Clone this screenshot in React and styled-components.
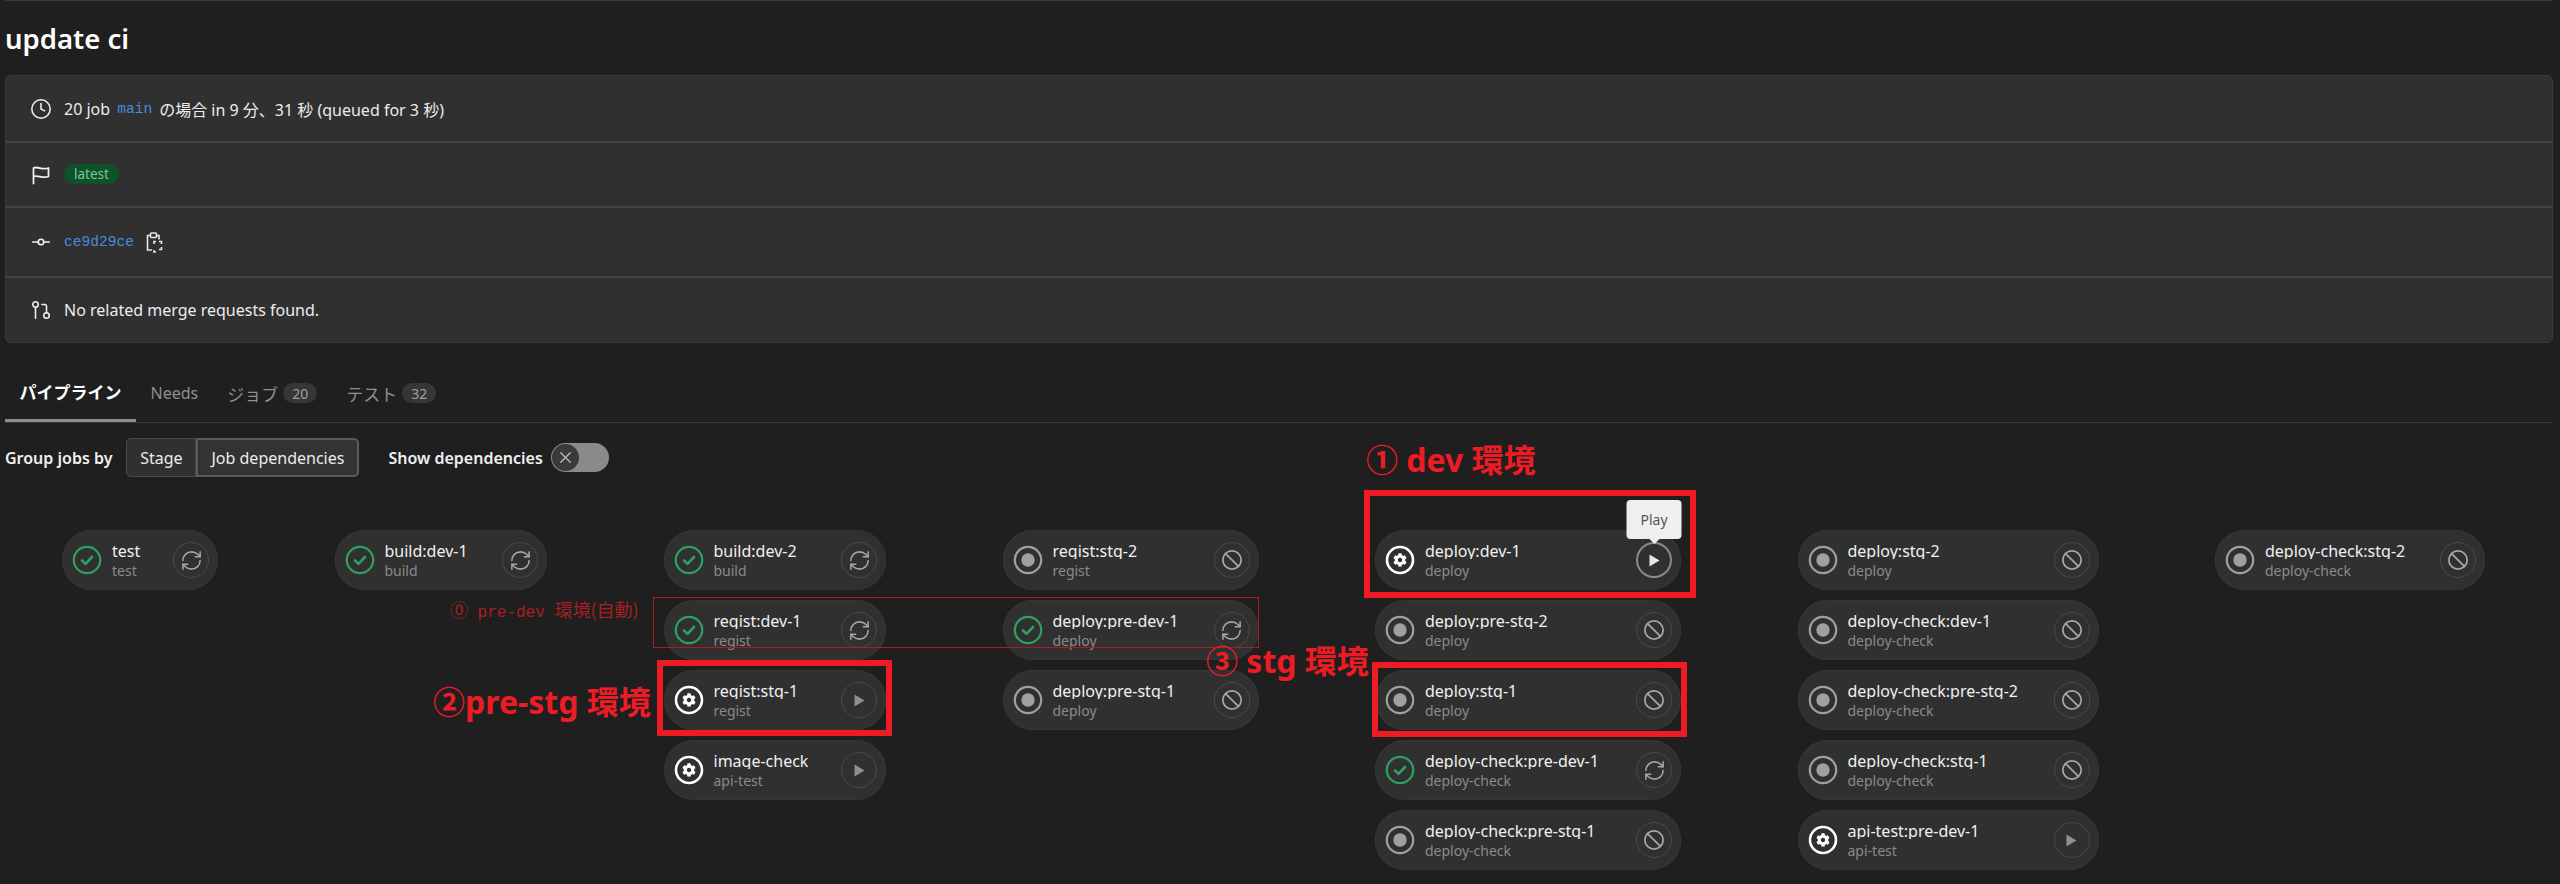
import React from 'react';
import styled, { createGlobalStyle } from 'styled-components';
import { Clock, GitCommitHorizontal, GitPullRequest, RefreshCw, Ban, X } from 'lucide-react';
import { FaCog } from 'react-icons/fa';

const SANS = `"Noto Sans", "Noto Sans CJK JP", sans-serif`;
const MONO = `"Liberation Mono", "Noto Sans CJK JP", monospace`;

const Global = createGlobalStyle`
  html, body { margin: 0; padding: 0; background: #1f1f1f; }
  body { font-family: ${SANS}; color: #ececec; }
`;

const Page = styled.div`
  position: relative;
  box-sizing: border-box;
  width: 2560px;
  height: 884px;
  padding: 0 7px 0 5px;
  overflow: hidden;
  background: #1f1f1f;
`;
const TopRule = styled.div`height: 1px; background: #3a3a3a;`;
const Title = styled.h1`
  margin: 0;
  height: 74px;
  display: flex;
  align-items: center;
  box-sizing: border-box;
  font-size: 27.5px;
  font-weight: 600;
  color: #fff;
`;
const InfoCard = styled.section`
  border: 1px solid #3c3c3c;
  border-radius: 6px;
  background: #303030;
  height: 268px;
  box-sizing: border-box;
  display: flex;
  flex-direction: column;
`;
const InfoRow = styled.div`
  height: ${p => p.$h}px;
  flex: none;
  box-sizing: border-box;
  display: flex;
  align-items: center;
  gap: 7px;
  padding-left: 24px;
  font-size: 16px;
  color: #ececec;
  border-bottom: ${p => (p.$last ? 'none' : '2px solid #444')};
`;
const RowIcon = styled.span`
  width: 22px;
  height: 22px;
  margin-right: 5px;
  display: flex;
  align-items: center;
  justify-content: center;
  color: #f0f0f0;
`;
const Code = styled.span`
  font-family: ${MONO};
  font-size: 14.6px;
  color: #428fdc;
`;
const Tag = styled.span`
  height: 20px;
  padding: 0 10px;
  border-radius: 10px;
  background: #0d532a;
  color: #7ec594;
  font-size: 13.5px;
  display: flex;
  align-items: center;
  margin-top: -2px;
`;
const TabBar = styled.nav`
  margin-top: 29px;
  height: 50px;
  display: flex;
  border-bottom: 1px solid #3a3a3a;
`;
const Tab = styled.div`
  display: flex;
  align-items: center;
  gap: 5px;
  padding: 0 ${p => p.$pad ?? 14.5}px 8px;
  height: 50px;
  box-sizing: border-box;
  font-size: ${p => p.$size ?? 16}px;
  font-weight: ${p => (p.$active ? 700 : 400)};
  color: ${p => (p.$active ? '#fff' : '#8f8f8f')};
  border-bottom: ${p => (p.$active ? '3px solid #8c8c8c' : 'none')};
`;
const Count = styled.span`
  height: 20px;
  min-width: 34px;
  border-radius: 10px;
  background: #363636;
  color: #a0a0a0;
  font-size: 14px;
  display: flex;
  align-items: center;
  justify-content: center;
`;
const Controls = styled.div`
  margin-top: 15px;
  height: 39px;
  display: flex;
  align-items: center;
  font-size: 16px;
`;
const ControlLabel = styled.span`
  font-weight: 600;
  color: #f0f0f0;
  margin-right: ${p => p.$mr}px;
`;
const ButtonGroup = styled.div`
  display: flex;
  height: 39px;
  margin-right: 29px;
`;
const Segment = styled.div`
  box-sizing: border-box;
  height: 39px;
  width: ${p => p.$w}px;
  display: flex;
  align-items: center;
  justify-content: center;
  background: ${p => (p.$selected ? '#333' : '#303030')};
  color: #ececec;
  border: ${p => (p.$selected ? '2px solid #5a5a5a' : '1px solid #4a4a4a')};
  border-radius: ${p => (p.$selected ? '0 5px 5px 0' : '5px 0 0 5px')};
  font-size: 16px;
`;
const Toggle = styled.div`
  margin-left: 8px;
  width: 58px;
  height: 29px;
  border-radius: 15px;
  background: #8a8a8a;
  display: flex;
  align-items: center;
  padding-left: 1px;
  box-sizing: border-box;
`;
const Knob = styled.span`
  width: 27px;
  height: 27px;
  border-radius: 50%;
  background: #3a3a3a;
  color: #bdbdbd;
  display: flex;
  align-items: center;
  justify-content: center;
`;
const Graph = styled.div`
  margin-top: 53px;
  padding-left: 57px;
  display: flex;
  gap: 116.5px;
  align-items: flex-start;
`;
const Column = styled.div`
  width: ${p => p.$w}px;
  flex: none;
  display: flex;
  flex-direction: column;
  gap: 10px;
`;
const Pill = styled.div`
  height: 60px;
  box-sizing: border-box;
  border-radius: 30px;
  background: #303030;
  box-shadow: inset 0 0 0 1px #363636;
  display: flex;
  align-items: center;
  padding: 0 9px 0 10px;
`;
const JobText = styled.div`
  margin-left: 10px;
  min-width: 0;
  flex: 1;
  display: flex;
  flex-direction: column;
  margin-top: 1px;
`;
const JobName = styled.div`
  font-size: 16px;
  line-height: 20px;
  height: 18px;
  overflow: hidden;
  white-space: nowrap;
  color: #f0f0f0;
`;
const JobStage = styled.div`
  margin-top: 2px;
  font-size: 14px;
  line-height: 19px;
  white-space: nowrap;
  color: #8a8a8a;
`;
const Action = styled.div`
  position: relative;
  flex: none;
  width: 36px;
  height: 36px;
  box-sizing: border-box;
  border-radius: 50%;
  border: ${p => (p.$hot ? '2px solid #8a8a8a' : '1px solid #4a4a4a')};
  color: ${p => (p.$hot ? '#e6e6e6' : '#a6a6a6')};
  display: flex;
  align-items: center;
  justify-content: center;
`;
const Tooltip = styled.div`
  position: absolute;
  left: 50%;
  bottom: calc(100% + 5px);
  transform: translateX(-50%);
  width: 55px;
  height: 39px;
  border-radius: 4px;
  background: #efefef;
  color: #555;
  font-size: 14px;
  display: flex;
  align-items: center;
  justify-content: center;
  z-index: 2;
  &::after {
    content: '';
    position: absolute;
    left: 50%;
    top: 100%;
    margin-left: -5px;
    border: 5px solid transparent;
    border-bottom-width: 0;
    border-top-color: #efefef;
  }
`;
const Frame = styled.div`
  position: absolute;
  box-sizing: border-box;
  left: ${p => p.$x}px;
  top: ${p => p.$y}px;
  width: ${p => p.$w}px;
  height: ${p => p.$h}px;
  border: ${p => p.$b}px solid ${p => (p.$b > 1 ? '#ed1c24' : '#a81e22')};
  pointer-events: none;
  z-index: 3;
`;
const Note = styled.div`
  position: absolute;
  left: ${p => p.$x}px;
  top: ${p => p.$y}px;
  font-size: 32px;
  line-height: 36px;
  font-weight: 700;
  white-space: nowrap;
  color: #ed1c24;
  z-index: 3;
`;
const SmallNote = styled(Note)`
  font-family: ${MONO};
  font-size: 16px;
  line-height: 24px;
  font-weight: 400;
  color: #a81e22;
`;
const Kanji = styled.span`
  font-family: "Noto Sans CJK JP", sans-serif;
  font-size: 18px;
`;

const Ring = ({ color, width = 2.2, children }) => (
  <svg width="30" height="30" viewBox="0 0 30 30" fill="none" style={{ flex: 'none' }}>
    <circle cx="15" cy="15" r={14 - width / 2 + 0.3} stroke={color} strokeWidth={width} />
    {children}
  </svg>
);

const Status = ({ kind }) => {
  if (kind === 'ok') {
    return (
      <Ring color="#2da160">
        <path d="M10 15.500l3.500 3.300L20 12" stroke="#2da160" strokeWidth="2.600" strokeLinecap="round" strokeLinejoin="round" />
      </Ring>
    );
  }
  if (kind === 'idle') {
    return (
      <Ring color="#a0a0a0">
        <circle cx="15" cy="15" r="6.700" fill="#a0a0a0" />
      </Ring>
    );
  }
  return (
    <Ring color="#fff" width={2.6}>
      <g transform="translate(8 8)">
        <FaCog size={14} color="#fff" />
      </g>
    </Ring>
  );
};

const PlayGlyph = ({ color }) => (
  <svg width="11" height="13" viewBox="0 0 11 13"><path d="M0.500 0.500L10.500 6.500L0.500 12.500Z" fill={color} /></svg>
);

const ActionIcon = ({ kind, hot }) => {
  if (kind === 'ok') return <RefreshCw size={23} strokeWidth={1.6} />;
  if (kind === 'idle') return <Ban size={22} strokeWidth={1.9} />;
  return <PlayGlyph color={hot ? '#e6e6e6' : '#8f8f8f'} />;
};

const Job = ({ name, stage, kind, hot }) => (
  <Pill>
    <Status kind={kind} />
    <JobText>
      <JobName>{name}</JobName>
      <JobStage>{stage}</JobStage>
    </JobText>
    <Action $hot={hot}>
      <ActionIcon kind={kind} hot={hot} />
      {hot && <Tooltip>Play</Tooltip>}
    </Action>
  </Pill>
);

const columns = [
  { w: 156, jobs: [['test', 'test', 'ok']] },
  { w: 212.5, jobs: [['build:dev-1', 'build', 'ok']] },
  { w: 222.5, jobs: [
    ['build:dev-2', 'build', 'ok'],
    ['regist:dev-1', 'regist', 'ok'],
    ['regist:stg-1', 'regist', 'manual'],
    ['image-check', 'api-test', 'manual'],
  ] },
  { w: 256, jobs: [
    ['regist:stg-2', 'regist', 'idle'],
    ['deploy:pre-dev-1', 'deploy', 'ok'],
    ['deploy:pre-stg-1', 'deploy', 'idle'],
  ] },
  { w: 306, jobs: [
    ['deploy:dev-1', 'deploy', 'manual', true],
    ['deploy:pre-stg-2', 'deploy', 'idle'],
    ['deploy:stg-1', 'deploy', 'idle'],
    ['deploy-check:pre-dev-1', 'deploy-check', 'ok'],
    ['deploy-check:pre-stg-1', 'deploy-check', 'idle'],
  ] },
  { w: 301, jobs: [
    ['deploy:stg-2', 'deploy', 'idle'],
    ['deploy-check:dev-1', 'deploy-check', 'idle'],
    ['deploy-check:pre-stg-2', 'deploy-check', 'idle'],
    ['deploy-check:stg-1', 'deploy-check', 'idle'],
    ['api-test:pre-dev-1', 'api-test', 'manual'],
  ] },
  { w: 270, jobs: [['deploy-check:stg-2', 'deploy-check', 'idle']] },
];

const FlagIcon = () => (
  <svg width="18" height="20" viewBox="0 0 18 20" fill="none" stroke="currentColor" strokeWidth="1.800" strokeLinejoin="round" strokeLinecap="round">
    <path d="M1.500 18.500V3C6 0.800 10 5.500 16.500 3v8.500C10 14 6 9.500 1.500 11.500" />
  </svg>
);
const ClipboardIcon = () => (
  <svg width="17" height="21" viewBox="0 0 17 21" fill="none" stroke="#e8e8e8" strokeWidth="1.600" style={{ marginLeft: 5 }}>
    <path d="M4 3.500H1.500v14.500H6" />
    <path d="M11 3.500h2v4" />
    <rect x="4.500" y="1" width="6" height="4.500" rx="1" />
    <path d="M8 12v-2.500h2M13 9.500h2.500V12M15.500 15v2.500H13M10 20H8v-2" />
  </svg>
);

export default function App() {
  return (
    <Page>
      <Global />
      <TopRule />
      <Title>update ci</Title>
      <InfoCard>
        <InfoRow $h={67}>
          <RowIcon><Clock size={22} strokeWidth={1.7} /></RowIcon>
          <span>20 job</span> <Code>main</Code> <span>の場合 in 9 分、31 秒 (queued for 3 秒)</span>
        </InfoRow>
        <InfoRow $h={65}>
          <RowIcon><FlagIcon /></RowIcon>
          <Tag>latest</Tag>
        </InfoRow>
        <InfoRow $h={70}>
          <RowIcon><GitCommitHorizontal size={24} strokeWidth={1.8} /></RowIcon>
          <Code>ce9d29ce</Code>
          <ClipboardIcon />
        </InfoRow>
        <InfoRow $h={64} $last>
          <RowIcon><GitPullRequest size={22} strokeWidth={1.7} /></RowIcon>
          <span>No related merge requests found.</span>
        </InfoRow>
      </InfoCard>
      <TabBar>
        <Tab $active $size={17}>パイプライン</Tab>
        <Tab>Needs</Tab>
        <Tab $size={17}>ジョブ <Count>20</Count></Tab>
        <Tab $size={17}>テスト <Count>32</Count></Tab>
      </TabBar>
      <Controls>
        <ControlLabel $mr={14}>Group jobs by</ControlLabel>
        <ButtonGroup>
          <Segment $w={70}>Stage</Segment>
          <Segment $w={163} $selected>Job dependencies</Segment>
        </ButtonGroup>
        <ControlLabel $mr={0}>Show dependencies</ControlLabel>
        <Toggle><Knob><X size={19} strokeWidth={1.6} /></Knob></Toggle>
      </Controls>
      <Graph>
        {columns.map(col => (
          <Column key={col.w} $w={col.w}>
            {col.jobs.map(([name, stage, kind, hot]) => (
              <Job key={name} name={name} stage={stage} kind={kind} hot={hot} />
            ))}
          </Column>
        ))}
      </Graph>
      <Frame $x={653} $y={597} $w={606} $h={51} $b={1} />
      <Frame $x={657} $y={660} $w={235} $h={76} $b={6} />
      <Frame $x={1364} $y={490} $w={332} $h={108} $b={6} />
      <Frame $x={1372} $y={662} $w={315} $h={75} $b={6} />
      <Note $x={1366} $y={442}>① dev 環境</Note>
      <Note $x={1206} $y={643}>③ stg 環境</Note>
      <Note $x={433} $y={684}>②pre-stg 環境</Note>
      <SmallNote $x={450} $y={597}><Kanji>⓪</Kanji> pre-dev <Kanji>環境(自動)</Kanji></SmallNote>
    </Page>
  );
}
